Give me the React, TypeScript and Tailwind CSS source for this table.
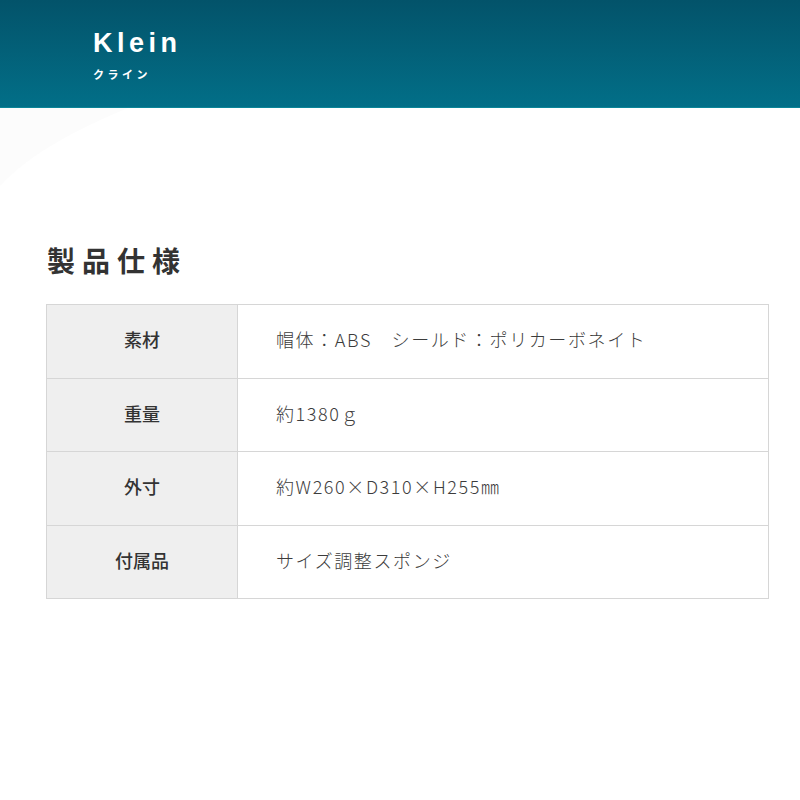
import React from 'react';

const specs = [
  { label: '素材', value: '帽体：ABS　シールド：ポリカーボネイト' },
  { label: '重量', value: '約1380ｇ' },
  { label: '外寸', value: '約W260×D310×H255㎜' },
  { label: '付属品', value: 'サイズ調整スポンジ' },
];

const App: React.FC = () => {
  return (
    <div className="w-[800px] h-[800px] bg-white overflow-hidden" style={{ fontFamily: '"Noto Sans CJK JP", "Noto Sans", sans-serif' }}>
      {/* header band */}
      <div className="h-[108px] bg-gradient-to-b from-[#03536a] to-[#026f88] border-b border-[#0b8598] pl-[93px] pt-[26px]">
        <div className="text-white text-[27px] font-bold tracking-[4.5px] leading-[34px]" style={{ fontFamily: '"Liberation Sans", Arial, sans-serif' }}>
          Klein
        </div>
        <div className="text-white text-[11px] font-bold tracking-[3.5px] mt-[7px] leading-[14px]">クライン</div>
      </div>

      <div className="relative">
        <svg className="absolute left-0 top-0" width="140" height="80" viewBox="0 0 140 80">
          <path d="M0 0 H128 C80 20 30 45 0 78 Z" fill="#fcfcfc" />
        </svg>
      </div>

      <div className="px-[46px] pt-[132px]">
        <h2 className="text-[28px] font-semibold text-[#333] tracking-[7px] leading-[40px] pl-[1px]">製品仕様</h2>

        <table className="mt-[24px] w-[723px] border-collapse border border-[#d6d6d6] text-[18px] text-[#3c3c3c]">
          <tbody>
            {specs.map((row) => (
              <tr key={row.label} className="h-[73.5px] border-b border-[#d6d6d6]">
                <td className="w-[191px] bg-[#efefef] border-r border-[#d6d6d6] text-center font-medium text-[#333] pb-[3px]">
                  {row.label}
                </td>
                <td className="pl-[38px] tracking-[1.6px] font-light pb-[3px]">{row.value}</td>
              </tr>
            ))}
          </tbody>
        </table>
      </div>
    </div>
  );
};

export default App;
